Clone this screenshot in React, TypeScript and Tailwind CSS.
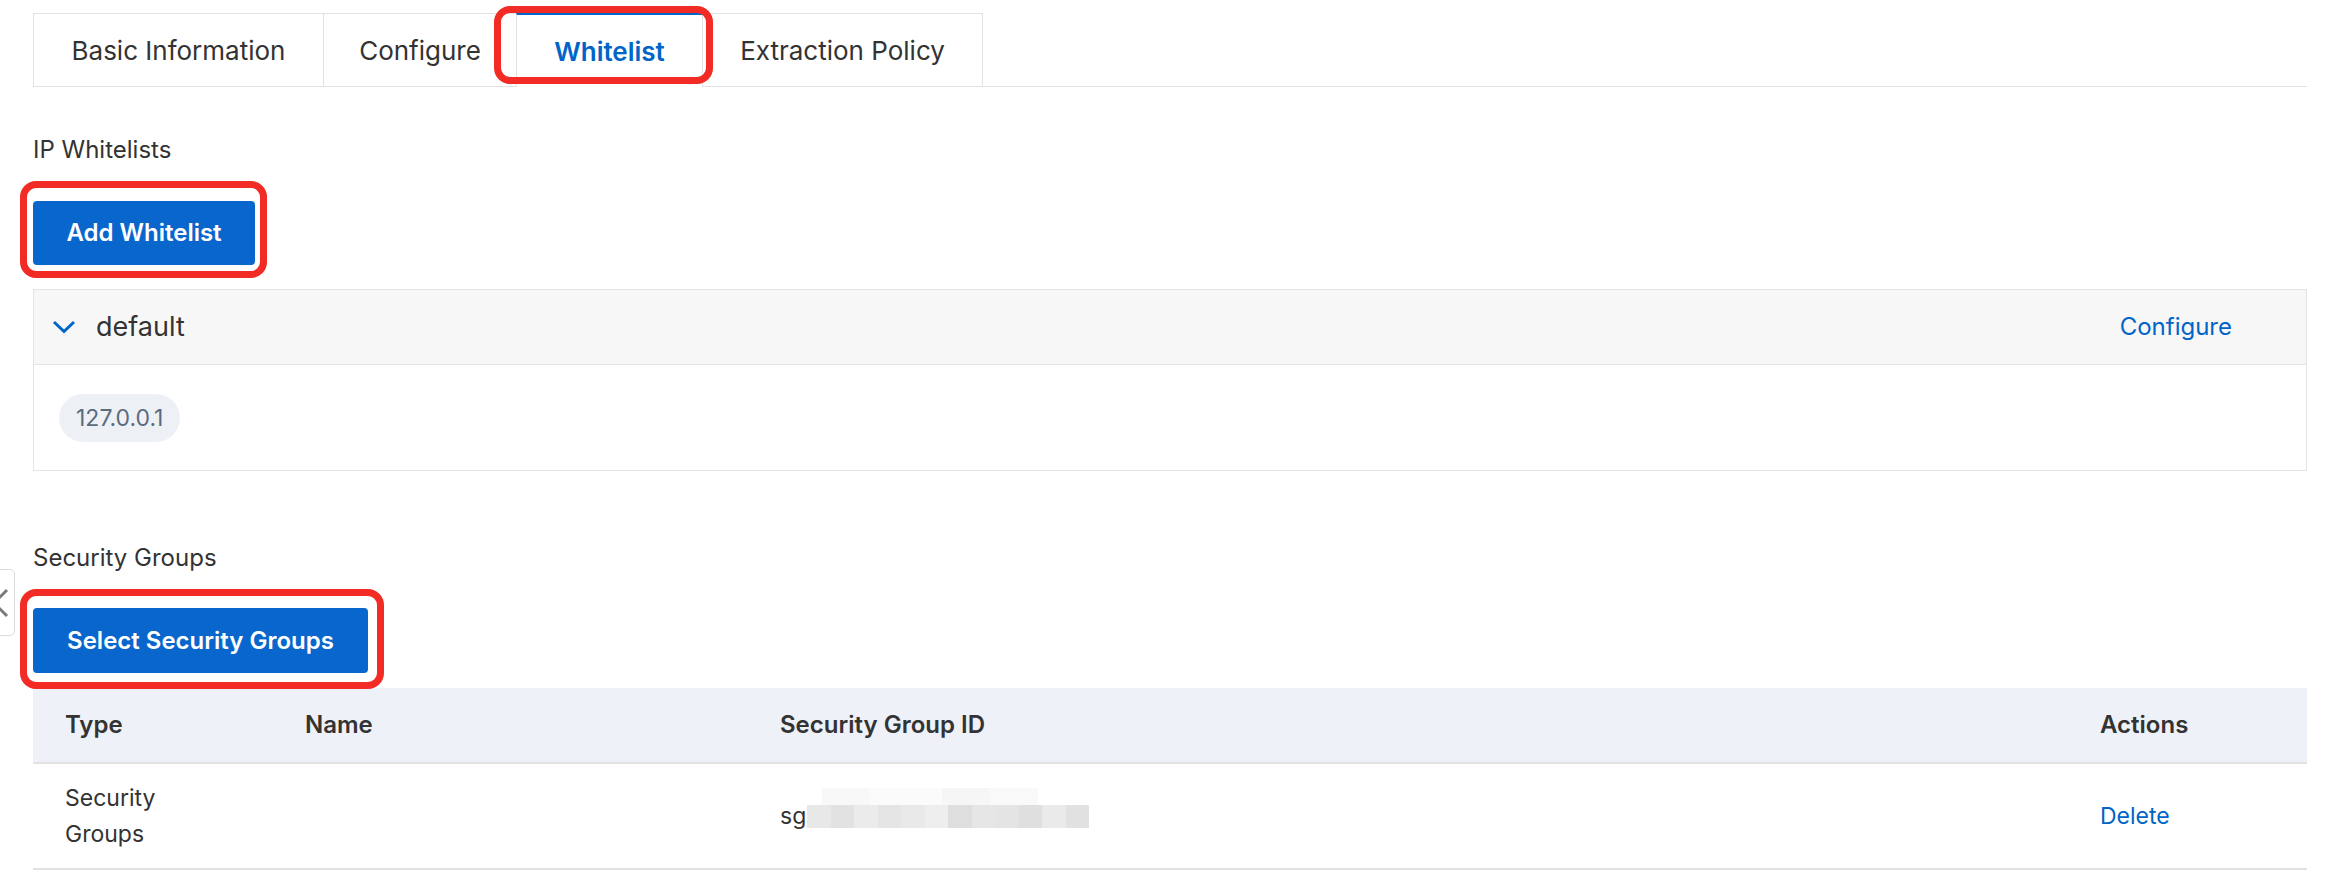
import { ReactNode } from 'react'

const tabs = [
  { label: 'Basic Information', width: 'w-[290px]' },
  { label: 'Configure', width: 'w-[193px]' },
  { label: 'Whitelist', width: 'w-[186px]', active: true },
  { label: 'Extraction Policy', width: 'w-[281px]' },
]

// red annotation box drawn over the target element
function Marked({ children, box }: { children: ReactNode; box: string }) {
  return (
    <div className="relative">
      {children}
      <span className={`pointer-events-none absolute rounded-[16px] border-[7px] border-[#f22b25] ${box}`} />
    </div>
  )
}

function Blur() {
  const shades = ['bg-[#e8e8e8]', 'bg-[#e2e2e2]', 'bg-[#ebebeb]', 'bg-[#e5e5e5]', 'bg-[#e9e9e9]', 'bg-[#eeeeee]', 'bg-[#dedede]', 'bg-[#e6e6e6]', 'bg-[#e4e4e4]', 'bg-[#dfdfdf]', 'bg-[#eaeaea]', 'bg-[#e1e1e1]']
  return (
    <div className="relative ml-[1px] flex h-[23px]">
      {shades.map((s, i) => (
        <div key={i} className={`h-full w-[23.5px] ${s}`} />
      ))}
      <div className="absolute left-[15px] top-[-17px] flex h-[17px]">
        <div className="h-full w-[48px] bg-[#f8f8f8]" />
        <div className="h-full w-[72px] bg-[#fbfbfb]" />
        <div className="h-full w-[48px] bg-[#f6f6f6]" />
        <div className="h-full w-[48px] bg-[#f9f9f9]" />
      </div>
    </div>
  )
}

export default function App() {
  return (
    <div className="relative h-[888px] w-[2346px] overflow-hidden bg-white pl-[33px] pr-[39px] pt-[13px] text-[#333] [font-family:Inter,'Liberation_Sans',sans-serif]">
      {/* sidebar collapse handle */}
      <div className="absolute left-[-17px] top-[569px] flex h-[67px] w-[32px] items-center justify-start rounded-[5px] border border-[#dcdcdc] bg-white">
        <svg width="22" height="32" viewBox="0 0 22 32" className="ml-[7px]">
          <path d="M16 3 L3 16 L16 29" fill="none" stroke="#7a7a7a" strokeWidth="3" />
        </svg>
      </div>

      {/* tabs */}
      <div className="flex border-b border-[#e2e2e2]">
        {tabs.map((t, i) =>
          t.active ? (
            <Marked key={t.label} box="-left-[22px] -right-[11px] -top-[7px] bottom-[2px]">
              <div className={`${t.width} -mb-px flex h-[74px] items-center justify-center border-l border-t-[2px] border-[#e2e2e2] border-t-[#0064c8] bg-white text-[26px] font-semibold text-[#0064c8]`}>
                {t.label}
              </div>
            </Marked>
          ) : (
            <div
              key={t.label}
              className={`${t.width} flex h-[73px] items-center justify-center border-l border-t border-[#e2e2e2] text-[26px] ${i === tabs.length - 1 ? 'border-r' : ''}`}
            >
              {t.label}
            </div>
          )
        )}
      </div>

      {/* IP whitelists */}
      <div className="mt-[47px] text-[24px] leading-[32px] text-[#333]">IP Whitelists</div>
      <div className="mt-[35px] flex">
        <Marked box="-left-[13px] -right-[12px] -top-[20px] -bottom-[13px]">
          <button className="h-[64px] w-[222px] rounded-[4px] bg-[#0866cc] text-[24px] font-semibold text-white">
            Add Whitelist
          </button>
        </Marked>
      </div>

      <div className="mt-[24px] border border-[#e4e4e4]">
        <div className="flex h-[75px] items-center border-b border-[#e4e4e4] bg-[#f7f7f7] pl-[18px] pr-[74px]">
          <svg width="24" height="14" viewBox="0 0 24 14">
            <path d="M2 2 L12 11.5 L22 2" fill="none" stroke="#0064c8" strokeWidth="3" />
          </svg>
          <span className="ml-[20px] text-[27px] text-[#333]">default</span>
          <span className="ml-auto text-[24px] text-[#0064c8]">Configure</span>
        </div>
        <div className="h-[105px] pl-[25px] pt-[29px]">
          <span className="inline-flex h-[48px] items-center rounded-full bg-[#edf1f6] px-[17px] text-[23px] text-[#5b6b80]">
            127.0.0.1
          </span>
        </div>
      </div>

      {/* security groups */}
      <div className="mt-[71px] text-[24px] leading-[32px] text-[#333]">Security Groups</div>
      <div className="mt-[34px] flex">
        <Marked box="-left-[13px] -right-[16px] -top-[19px] -bottom-[16px]">
          <button className="h-[65px] w-[335px] rounded-[4px] bg-[#0866cc] text-[24px] font-semibold text-white">
            Select Security Groups
          </button>
        </Marked>
      </div>

      <div className="mt-[15px]">
        <div className="grid h-[76px] grid-cols-[240px_475px_1fr_239px] items-center border-b-2 border-[#e2e2e2] bg-[#eef1f8] text-[24px] font-semibold text-[#333]">
          <div className="px-8">Type</div>
          <div className="px-8">Name</div>
          <div className="px-8">Security Group ID</div>
          <div className="px-8">Actions</div>
        </div>
        <div className="grid h-[106px] grid-cols-[240px_475px_1fr_239px] items-center border-b-2 border-[#e2e2e2] text-[23px] text-[#333]">
          <div className="max-w-[200px] px-8 leading-[36px]">Security Groups</div>
          <div className="px-8" />
          <div className="flex items-center px-8">
            <span>sg</span>
            <Blur />
          </div>
          <div className="px-8 text-[#0064c8]">Delete</div>
        </div>
      </div>
    </div>
  )
}
